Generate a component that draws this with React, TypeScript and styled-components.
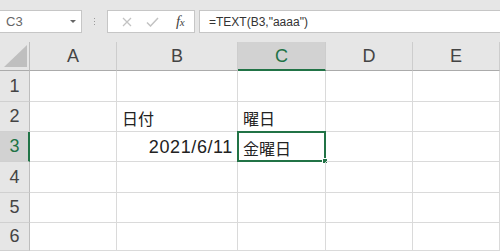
import styled, { createGlobalStyle } from "styled-components";

const GlobalStyle = createGlobalStyle`
  html, body {
    margin: 0;
    padding: 0;
    background: #e6e6e6;
    overflow: hidden;
  }
  body {
    font-family: "Liberation Sans", "Noto Sans CJK JP", sans-serif;
  }
`;

const EXCEL_GREEN = "#217346";

const Page = styled.div`
  width: 500px;
  height: 251px;
  display: flex;
  flex-direction: column;
  background: #e6e6e6;
`;

const Toolbar = styled.div`
  display: flex;
  align-items: center;
  height: 42px;
  padding-top: 10px;
  padding-bottom: 9px;
  box-sizing: border-box;
`;

const NameBox = styled.div`
  position: relative;
  width: 82px;
  height: 23px;
  box-sizing: border-box;
  background: #fff;
  border: 1px solid #c6c6c6;
  border-left: none;
  display: flex;
  align-items: center;
  padding-left: 6px;
  font-size: 13px;
  color: #666;
`;

const DropArrow = styled.span`
  margin-left: auto;
  margin-right: 5px;
  width: 0;
  height: 0;
  border-left: 3px solid transparent;
  border-right: 3px solid transparent;
  border-top: 3px solid #666;
`;

const Grip = styled.div`
  width: 2px;
  margin: 0 11px 0 12px;
  display: flex;
  flex-direction: column;
  gap: 2px;

  span {
    width: 1px;
    height: 1px;
    background: #9a9a9a;
  }
`;

const ButtonBox = styled.div`
  width: 88px;
  height: 23px;
  box-sizing: border-box;
  background: #fff;
  border: 1px solid #c6c6c6;
  display: flex;
  align-items: center;
  padding-left: 9px;
`;

const BarButton = styled.span<{ $w: number }>`
  width: ${(p) => p.$w}px;
  display: flex;
  align-items: center;
  justify-content: center;
`;

const Fx = styled.span`
  font-family: "Liberation Serif", "DejaVu Serif", serif;
  font-style: italic;
  font-size: 15px;
  color: #444;
  letter-spacing: -0.5px;

  small {
    font-size: 11px;
  }
`;

const FormulaInput = styled.div`
  flex: 1;
  margin-left: 4px;
  height: 23px;
  box-sizing: border-box;
  background: #fff;
  border: 1px solid #c6c6c6;
  border-right: none;
  display: flex;
  align-items: center;
  padding-left: 9px;
  font-size: 12px;
  color: #333;
`;

const Sheet = styled.div`
  flex: 1;
  display: grid;
  grid-template-columns: 30px 87px 121px 88px 87px 1fr;
  grid-template-rows: 29px 31px 30px 30px 31px 30px 1fr;
  background: #fff;
  overflow: hidden;
`;

const Corner = styled.div`
  background: #e6e6e6;
  border-right: 1px solid #bdbdbd;
  border-bottom: 1px solid #ababab;
  box-sizing: border-box;
  display: flex;
  align-items: flex-end;
  justify-content: flex-end;
  padding: 0 2px 3px 0;
`;

const CornerTriangle = styled.div`
  width: 23px;
  height: 22px;
  background: #bfbfbf;
  clip-path: polygon(100% 0, 100% 100%, 0 100%);
`;

const ColHeader = styled.div<{ $active?: boolean }>`
  background: ${(p) => (p.$active ? "#d2d2d2" : "#e6e6e6")};
  border-right: 1px solid #cdcdcd;
  border-bottom: ${(p) =>
    p.$active ? `2px solid ${EXCEL_GREEN}` : "1px solid #ababab"};
  box-sizing: border-box;
  display: flex;
  align-items: center;
  justify-content: center;
  padding-top: ${(p) => (p.$active ? "1px" : "0")};
  font-size: 18px;
  color: ${(p) => (p.$active ? EXCEL_GREEN : "#444")};
`;

const RowHeader = styled.div<{ $active?: boolean }>`
  background: ${(p) => (p.$active ? "#d2d2d2" : "#e6e6e6")};
  border-right: ${(p) =>
    p.$active ? `2px solid ${EXCEL_GREEN}` : "1px solid #bdbdbd"};
  border-bottom: 1px solid #d0d0d0;
  box-sizing: border-box;
  display: flex;
  align-items: center;
  justify-content: center;
  padding-left: ${(p) => (p.$active ? "1px" : "0")};
  font-size: 18px;
  color: ${(p) => (p.$active ? EXCEL_GREEN : "#444")};
`;

const Cell = styled.div<{ $align?: "left" | "right"; $selected?: boolean; $latin?: boolean }>`
  position: relative;
  border-right: 1px solid #dadada;
  border-bottom: 1px solid #dadada;
  box-sizing: border-box;
  display: flex;
  align-items: center;
  justify-content: ${(p) => (p.$align === "right" ? "flex-end" : "flex-start")};
  padding: 2px 4px 0 5px;
  font-family: ${(p) =>
    p.$latin
      ? `"Liberation Sans", "Noto Sans CJK JP", sans-serif`
      : `"Noto Sans CJK JP", sans-serif`};
  font-size: ${(p) => (p.$latin ? "18px" : "16px")};
  letter-spacing: ${(p) => (p.$latin ? "0.6px" : "0")};
  color: #222;
  white-space: nowrap;

  ${(p) =>
    p.$selected &&
    `
    &::before {
      content: "";
      position: absolute;
      top: -1px;
      left: -1px;
      right: -1px;
      bottom: -1px;
      border: 2px solid ${EXCEL_GREEN};
      pointer-events: none;
    }
    &::after {
      content: "";
      position: absolute;
      right: -3px;
      bottom: -3px;
      width: 4px;
      height: 4px;
      background: ${EXCEL_GREEN};
      border: 1px solid #fff;
    }
  `}
`;

const columns = ["A", "B", "C", "D", "E"];

const data: Record<string, { text: string; align?: "left" | "right"; latin?: boolean }> = {
  B2: { text: "日付" },
  C2: { text: "曜日" },
  B3: { text: "2021/6/11", align: "right", latin: true },
  C3: { text: "金曜日" },
};

export default function App() {
  const selected = "C3";
  return (
    <>
      <GlobalStyle />
      <Page>
        <Toolbar>
          <NameBox>
            {selected}
            <DropArrow />
          </NameBox>
          <Grip>
            <span />
            <span />
            <span />
          </Grip>
          <ButtonBox>
            <BarButton $w={20}>
              <svg width="10" height="10" viewBox="0 0 10 10">
                <path d="M1 1L9 9M9 1L1 9" stroke="#c3c3c3" strokeWidth="1.3" fill="none" />
              </svg>
            </BarButton>
            <BarButton $w={30}>
              <svg width="13" height="10" viewBox="0 0 13 10">
                <path d="M1 5.5L4.5 9L12 1" stroke="#c3c3c3" strokeWidth="1.5" fill="none" />
              </svg>
            </BarButton>
            <BarButton $w={26}>
              <Fx>
                f<small>x</small>
              </Fx>
            </BarButton>
          </ButtonBox>
          <FormulaInput>=TEXT(B3,"aaaa")</FormulaInput>
        </Toolbar>
        <Sheet>
          <Corner>
            <CornerTriangle />
          </Corner>
          {columns.map((c) => (
            <ColHeader key={c} $active={c === selected[0]}>
              {c}
            </ColHeader>
          ))}
          {[1, 2, 3, 4, 5, 6].map((r) => (
            <Row key={r} row={r} selected={selected} />
          ))}
        </Sheet>
      </Page>
    </>
  );
}

function Row({ row, selected }: { row: number; selected: string }) {
  return (
    <>
      <RowHeader $active={String(row) === selected.slice(1)}>{row}</RowHeader>
      {columns.map((c) => {
        const key = `${c}${row}`;
        const d = data[key];
        return (
          <Cell key={key} $align={d?.align} $latin={d?.latin} $selected={key === selected}>
            {d?.text}
          </Cell>
        );
      })}
    </>
  );
}
